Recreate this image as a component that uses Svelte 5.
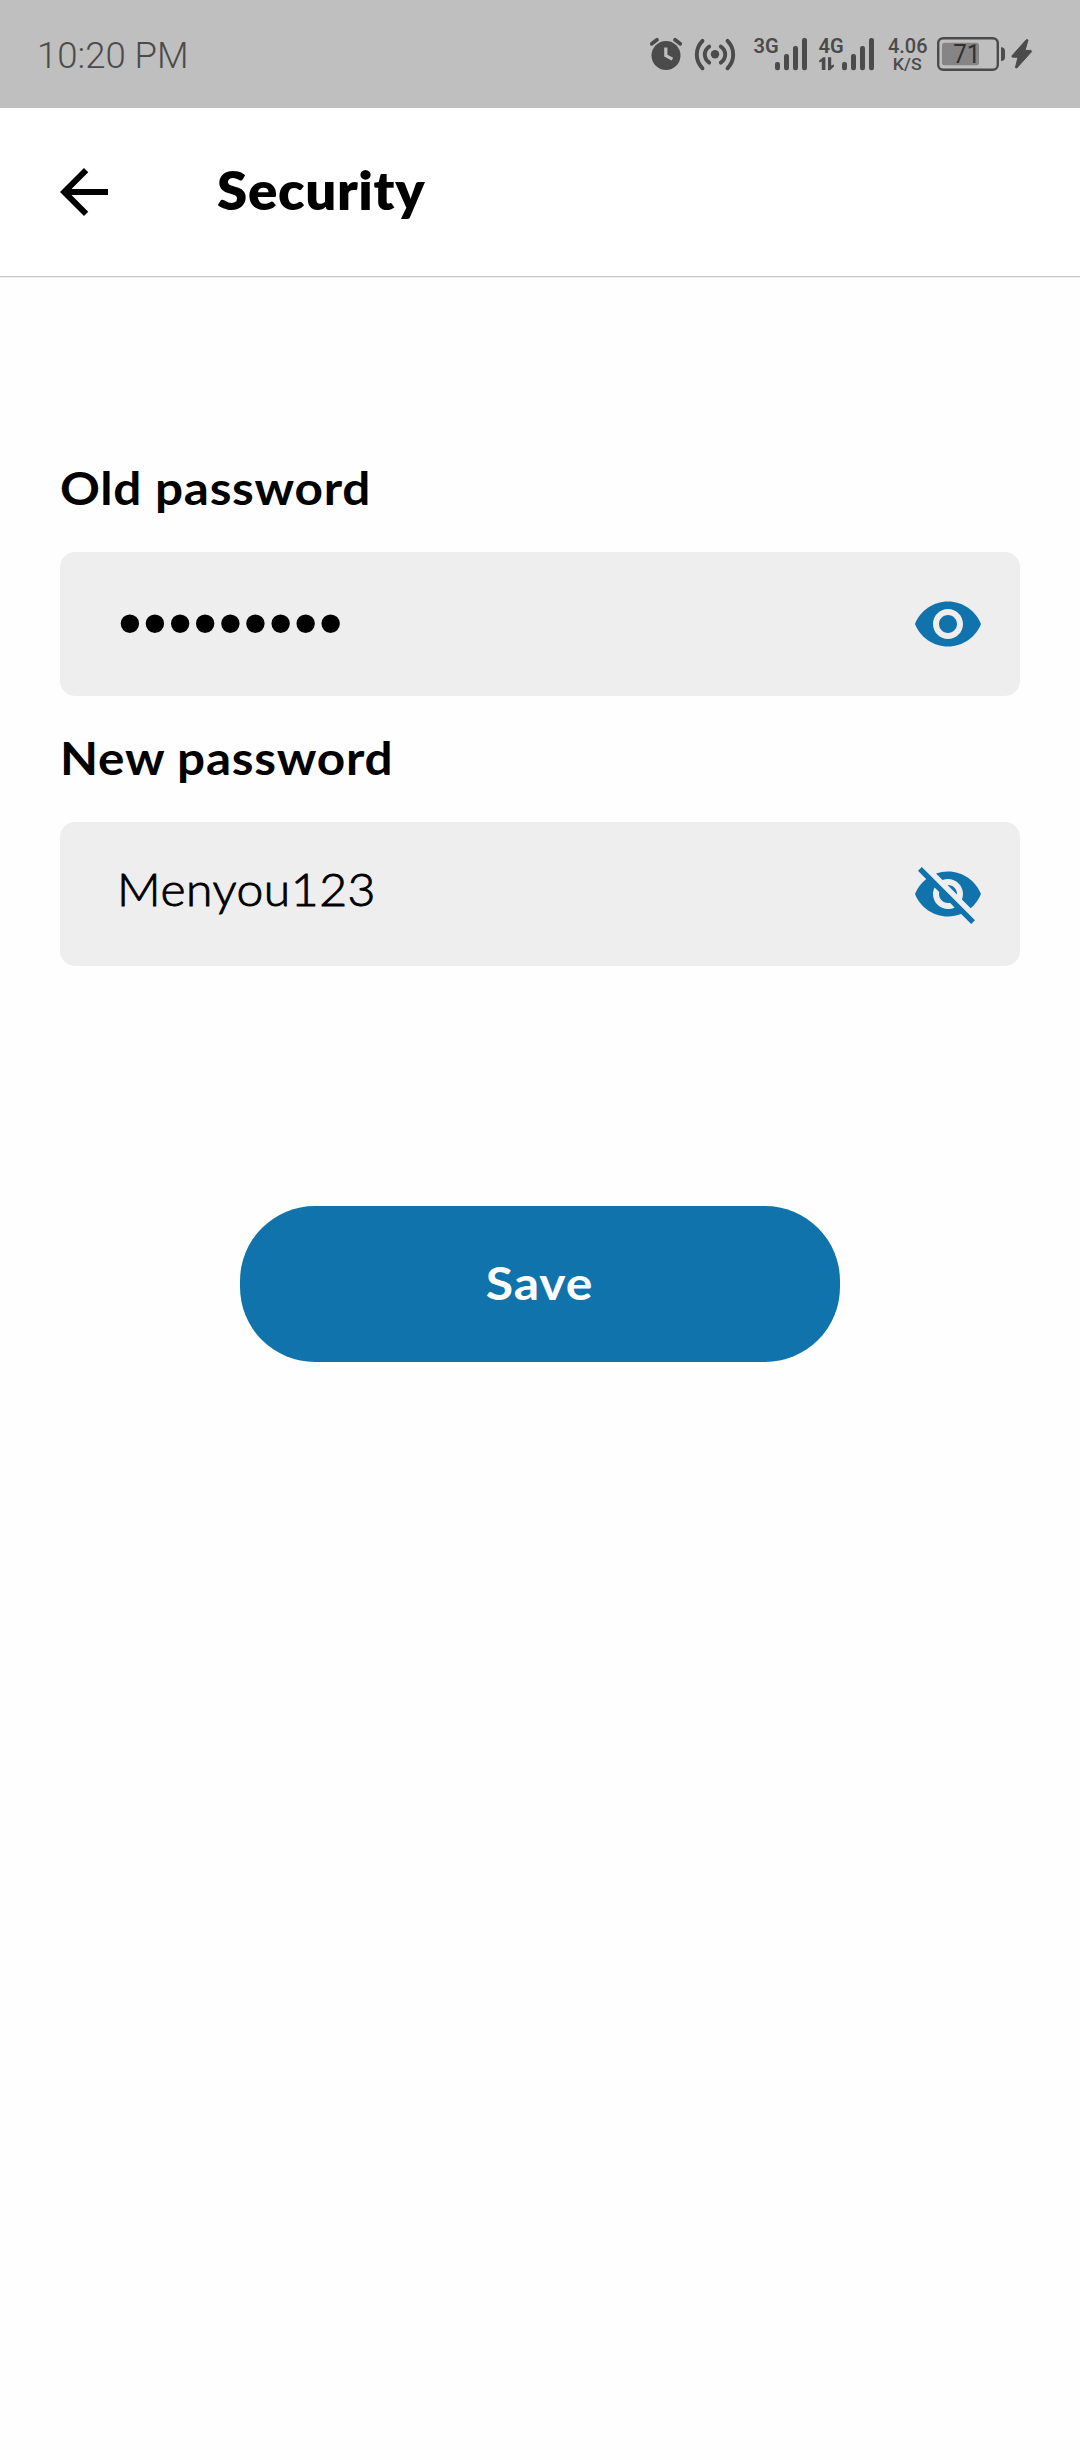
<script>
  const fields = [
    { label: 'Old password', value: '•••••••••', hidden: true },
    { label: 'New password', value: 'Menyou123', hidden: false }
  ];
  const bars = [
    { x: 0, y: 62 },
    { x: 9, y: 54 },
    { x: 18, y: 46 },
    { x: 27, y: 38 }
  ];
</script>

<div class="screen">
  <div class="status">
    <span class="time">10:20 PM</span>
    <div class="indicators">
      <svg class="alarm" width="34" height="36" viewBox="649 36 34 36">
        <circle cx="666" cy="55.4" r="14.5" fill="#4b4b4b" />
        <path d="M651.8 43.8L657 39.8M680.2 43.8L675 39.8" stroke="#4b4b4b" stroke-width="3.8" stroke-linecap="round" />
        <path d="M665.8 47.6V55.6L672.4 59.2" fill="none" stroke="#bfbfbf" stroke-width="3.2" />
      </svg>
      <svg class="hotspot" width="42" height="36" viewBox="694 36 42 36" fill="none" stroke="#4b4b4b" stroke-width="3.9" stroke-linecap="round">
        <circle cx="715" cy="54.2" r="4.2" fill="#4b4b4b" stroke="none" />
        <path d="M709.2 46.6Q704.8 49.6 704.8 54.5T709.2 62.6M720.8 46.6Q725.2 49.6 725.2 54.5T720.8 62.6" />
        <path d="M702.5 40.8Q696.8 46.5 696.8 54.5T702.5 68.3M727.5 40.8Q733.2 46.5 733.2 54.5T727.5 68.3" />
      </svg>
      <svg class="net" width="56" height="36" viewBox="752 36 56 36" fill="#4b4b4b">
        <text x="753.4" y="53.2" font-size="21" font-weight="600" textLength="25.2" lengthAdjust="spacingAndGlyphs">3G</text>
        {#each bars as b}
          <rect x={775 + b.x} y={b.y} width="5" height={70.2 - b.y} rx="2.2" />
        {/each}
      </svg>
      <svg class="net four" width="58" height="36" viewBox="817 36 58 36" fill="#4b4b4b">
        <text x="818.6" y="53.2" font-size="21" font-weight="600" textLength="25.2" lengthAdjust="spacingAndGlyphs">4G</text>
        <path d="M821.8 70V61.6L819.2 62.6V60.4L823.2 57.2H825.4V70ZM828 57.2H831.2V65.4L834 64.4V66.6L830 70.2H828Z" />
        {#each bars as b}
          <rect x={842 + b.x} y={b.y} width="5" height={70.2 - b.y} rx="2.2" />
        {/each}
      </svg>
      <svg class="speed" width="42" height="36" viewBox="887 36 42 36" fill="#4b4b4b">
        <text x="888" y="53" font-size="21" font-weight="500" textLength="39.5" lengthAdjust="spacingAndGlyphs">4.06</text>
        <text x="892.8" y="70" font-size="16.5" font-weight="500" textLength="28.8" lengthAdjust="spacingAndGlyphs">K/S</text>
      </svg>
      <svg class="battery" width="70" height="36" viewBox="936 36 70 36">
        <rect x="938.2" y="38.2" width="59.6" height="31.6" rx="5" fill="none" stroke="#4b4b4b" stroke-width="2.4" />
        <rect x="942" y="42.7" width="37" height="22.6" rx="2.5" fill="#858585" />
        <path d="M1001 47.2Q1005 47.2 1005 51V57Q1005 61 1001 61Z" fill="#4b4b4b" />
        <text x="953.2" y="63" font-size="25" fill="#303030" textLength="27" lengthAdjust="spacingAndGlyphs">71</text>
      </svg>
      <svg class="bolt" width="24" height="36" viewBox="1010 36 24 36">
        <path d="M1026.6 39.4L1011.8 56L1012.4 57.2H1018L1015.4 67.6L1016.8 68L1031.6 51.6L1031 50.4H1025L1028 40Z" fill="#4b4b4b" stroke="#4b4b4b" stroke-width="1" stroke-linejoin="round" />
      </svg>
    </div>
  </div>

  <header>
    <svg class="back" width="72" height="72" viewBox="0 0 24 24"><path d="M20 11H7.83l5.59-5.59L12 4l-8 8 8 8 1.41-1.41L7.83 13H20v-2z" /></svg>
    <h1>Security</h1>
  </header>

  <main>
    {#each fields as f}
      <div class="label">{f.label}</div>
      <div class="field">
        <span class={f.hidden ? 'dots' : 'value'}>{f.value}</span>
        <svg width="72" height="72" viewBox="0 0 24 24" fill="#1173ac">
          {#if f.hidden}
            <path d="M12 4.5C7 4.5 2.73 7.61 1 12c1.73 4.39 6 7.5 11 7.5s9.27-3.11 11-7.5c-1.73-4.39-6-7.5-11-7.5zM12 17c-2.76 0-5-2.24-5-5s2.24-5 5-5 5 2.24 5 5-2.24 5-5 5zm0-8c-1.66 0-3 1.34-3 3s1.34 3 3 3 3-1.34 3-3-1.34-3-3-3z" />
          {:else}
            <path d="M12 7c2.76 0 5 2.24 5 5 0 .65-.13 1.26-.36 1.83l2.92 2.92c1.51-1.26 2.7-2.89 3.43-4.75-1.73-4.39-6-7.5-11-7.5-1.4 0-2.74.25-3.98.7l2.16 2.16C10.74 7.13 11.35 7 12 7zM2 4.27l2.28 2.28.46.46C3.08 8.3 1.78 10.02 1 12c1.73 4.39 6 7.5 11 7.5 1.55 0 3.03-.3 4.38-.84l.42.42L19.73 22 21 20.73 3.27 3 2 4.27zM7.53 9.8l1.55 1.55c-.05.21-.08.43-.08.65 0 1.66 1.34 3 3 3 .22 0 .44-.03.65-.08l1.55 1.55c-.67.33-1.41.53-2.2.53-2.76 0-5-2.24-5-5 0-.79.2-1.53.53-2.2zm4.31-.78l3.15 3.15.02-.16c0-1.66-1.34-3-3-3l-.17.01z" />
          {/if}
        </svg>
      </div>
    {/each}
    <button><span>Save</span></button>
  </main>
</div>

<style>
  :global(body) { background: #fefefe; }
  .screen {
    width: 1080px;
    height: 2460px;
    display: flex;
    flex-direction: column;
    background: #fefefe;
    font-family: Lato, "Open Sans", sans-serif;
    color: #000;
    overflow: hidden;
  }
  .status {
    height: 108px;
    flex: none;
    box-sizing: border-box;
    padding: 0 46px 0 37px;
    display: flex;
    justify-content: space-between;
    align-items: center;
    background: #bfbfbf;
    font-family: Roboto, sans-serif;
  }
  .time {
    font-size: 36.5px;
    font-weight: 300;
    line-height: 42px;
    padding-top: 4px;
    color: #4b4b4b;
  }
  .indicators { display: flex; }
  .indicators svg { display: block; overflow: visible; }
  .hotspot { margin-left: 11px; }
  .net { margin-left: 16px; }
  .four { margin-left: 9px; }
  .speed { margin-left: 12px; }
  .battery { margin-left: 7px; }
  .bolt { margin-left: 4px; }
  header {
    height: 168px;
    flex: none;
    box-sizing: border-box;
    padding-left: 48px;
    display: flex;
    align-items: center;
    background: #fff;
    box-shadow: 0 1px 0 #c9c9c9, 0 2px 0 #ededed;
  }
  h1 {
    margin: 0 0 0 97px;
    padding-bottom: 4px;
    font-size: 52px;
    line-height: 60px;
    font-weight: 800;
    letter-spacing: 0.6px;
    transform: scaleX(1.05);
    transform-origin: left;
  }
  main {
    display: flex;
    flex-direction: column;
    padding: 174px 60px 0;
  }
  .label {
    height: 78px;
    margin-bottom: 24px;
    line-height: 75px;
    font-size: 46px;
    font-weight: 700;
    letter-spacing: 0.7px;
    transform: scaleX(1.075);
    transform-origin: left;
  }
  .field {
    height: 144px;
    box-sizing: border-box;
    padding: 0 36px 0 57px;
    margin-bottom: 24px;
    border-radius: 15px;
    background: #eee;
    display: flex;
    align-items: center;
    justify-content: space-between;
  }
  .value {
    font-size: 46px;
    font-weight: 300;
    line-height: 56px;
    padding-bottom: 11px;
    letter-spacing: 0.5px;
    -webkit-text-stroke: 0.9px #000;
    transform: scaleX(1.045);
    transform-origin: left;
  }
  .dots {
    font-family: "Liberation Sans", sans-serif;
    font-size: 68px;
    line-height: 80px;
    letter-spacing: 1.3px;
    padding: 0 0 5px 1px;
  }
  button {
    width: 600px;
    height: 156px;
    margin: 216px auto 0;
    padding: 0 0 4px;
    border: 0;
    border-radius: 75px;
    background: #1173ac;
    color: #fff;
    font-family: inherit;
    font-size: 46px;
    font-weight: 700;
    letter-spacing: 0.8px;
  }
  button span {
    display: inline-block;
    transform: scaleX(1.085);
  }
</style>
